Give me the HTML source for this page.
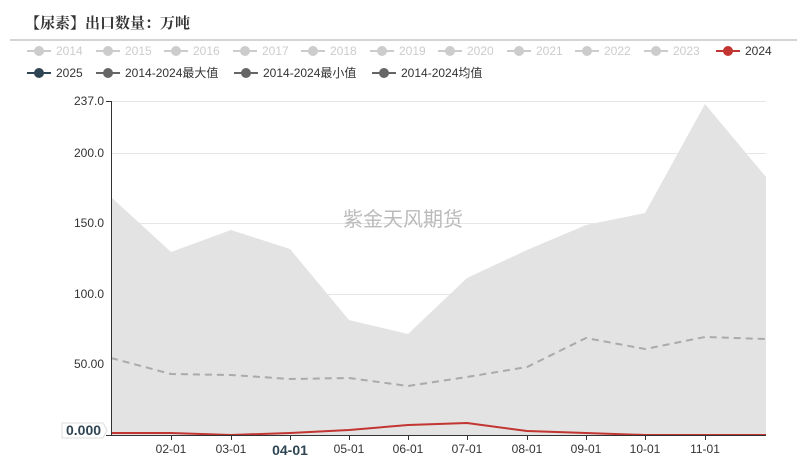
<!DOCTYPE html>
<html><head><meta charset="utf-8"><style>
body{margin:0;background:#fff;width:807px;height:460px;overflow:hidden;font-family:"Liberation Sans","Noto Sans CJK SC",sans-serif}
</style></head><body>
<svg width="807" height="460" xmlns="http://www.w3.org/2000/svg" font-family="Liberation Sans, Noto Sans CJK SC, sans-serif">
<text x="25" y="28" font-size="15" font-weight="bold" fill="#333" font-family="Noto Serif CJK SC, serif">【尿素】出口数量：万吨</text>
<line x1="10" y1="40" x2="797" y2="40" stroke="#aaa" stroke-width="1"/>
<g font-size="12" fill="#ccc">
<g id="l">
</g>
</g>
<g font-size="12">
<line x1="27" y1="51" x2="51" y2="51" stroke="#ccc" stroke-width="2"/><circle cx="39" cy="51" r="5" fill="#ccc"/><text x="56" y="55" fill="#ccc">2014</text>
<line x1="96" y1="51" x2="120" y2="51" stroke="#ccc" stroke-width="2"/><circle cx="108" cy="51" r="5" fill="#ccc"/><text x="125" y="55" fill="#ccc">2015</text>
<line x1="164" y1="51" x2="188" y2="51" stroke="#ccc" stroke-width="2"/><circle cx="176" cy="51" r="5" fill="#ccc"/><text x="193" y="55" fill="#ccc">2016</text>
<line x1="233" y1="51" x2="257" y2="51" stroke="#ccc" stroke-width="2"/><circle cx="245" cy="51" r="5" fill="#ccc"/><text x="262" y="55" fill="#ccc">2017</text>
<line x1="301" y1="51" x2="325" y2="51" stroke="#ccc" stroke-width="2"/><circle cx="313" cy="51" r="5" fill="#ccc"/><text x="330" y="55" fill="#ccc">2018</text>
<line x1="370" y1="51" x2="394" y2="51" stroke="#ccc" stroke-width="2"/><circle cx="382" cy="51" r="5" fill="#ccc"/><text x="399" y="55" fill="#ccc">2019</text>
<line x1="438" y1="51" x2="462" y2="51" stroke="#ccc" stroke-width="2"/><circle cx="450" cy="51" r="5" fill="#ccc"/><text x="467" y="55" fill="#ccc">2020</text>
<line x1="507" y1="51" x2="531" y2="51" stroke="#ccc" stroke-width="2"/><circle cx="519" cy="51" r="5" fill="#ccc"/><text x="536" y="55" fill="#ccc">2021</text>
<line x1="575" y1="51" x2="599" y2="51" stroke="#ccc" stroke-width="2"/><circle cx="587" cy="51" r="5" fill="#ccc"/><text x="604" y="55" fill="#ccc">2022</text>
<line x1="644" y1="51" x2="668" y2="51" stroke="#ccc" stroke-width="2"/><circle cx="656" cy="51" r="5" fill="#ccc"/><text x="673" y="55" fill="#ccc">2023</text>
<line x1="716" y1="51" x2="740" y2="51" stroke="#c23531" stroke-width="2"/><circle cx="728" cy="51" r="5" fill="#c23531"/><text x="745" y="55" fill="#333">2024</text>
<line x1="27" y1="73" x2="51" y2="73" stroke="#2f4554" stroke-width="2"/><circle cx="39" cy="73" r="5" fill="#2f4554"/><text x="56" y="77" fill="#333">2025</text>
<line x1="96" y1="73" x2="120" y2="73" stroke="#666" stroke-width="2"/><circle cx="108" cy="73" r="5" fill="#666"/><text x="125" y="77" fill="#333">2014-2024最大值</text>
<line x1="234" y1="73" x2="258" y2="73" stroke="#666" stroke-width="2"/><circle cx="246" cy="73" r="5" fill="#666"/><text x="263" y="77" fill="#333">2014-2024最小值</text>
<line x1="372" y1="73" x2="396" y2="73" stroke="#666" stroke-width="2"/><circle cx="384" cy="73" r="5" fill="#666"/><text x="401" y="77" fill="#333">2014-2024均值</text>
</g>
<g stroke="#e6e6e6" stroke-width="1">
<line x1="111" y1="101.5" x2="766" y2="101.5"/><line x1="111" y1="153.5" x2="766" y2="153.5"/><line x1="111" y1="223.5" x2="766" y2="223.5"/><line x1="111" y1="294.5" x2="766" y2="294.5"/><line x1="111" y1="364.5" x2="766" y2="364.5"/>
</g>
<polygon points="111,197 171,252 231,230 290,249 349,320 408,334 467,278 527,250 586,225 645,213 705,104 766,177 766,435 111,435" fill="#e3e3e3"/>
<text x="403" y="226" font-size="20" fill="#bbb" text-anchor="middle">紫金天风期货</text>
<polyline points="111,358 171,374 231,375 290,379 349,378 408,386 467,377 527,367 586,338 645,349 705,337 766,339" fill="none" stroke="#aaa" stroke-width="2" stroke-dasharray="7,5"/>
<polyline points="111,433 171,433 231,435 290,433 349,430 408,425 467,423 527,431 586,433 645,435 766,435" fill="none" stroke="#c23531" stroke-width="2"/>
<line x1="111.5" y1="101" x2="111.5" y2="435" stroke="#333"/>
<line x1="106" y1="101.5" x2="111" y2="101.5" stroke="#333"/>
<line x1="106" y1="435.5" x2="766" y2="435.5" stroke="#333"/>
<g stroke="#333"><line x1="171.5" y1="435" x2="171.5" y2="440"/><line x1="231.5" y1="435" x2="231.5" y2="440"/><line x1="290.5" y1="435" x2="290.5" y2="440"/><line x1="349.5" y1="435" x2="349.5" y2="440"/><line x1="408.5" y1="435" x2="408.5" y2="440"/><line x1="467.5" y1="435" x2="467.5" y2="440"/><line x1="527.5" y1="435" x2="527.5" y2="440"/><line x1="586.5" y1="435" x2="586.5" y2="440"/><line x1="645.5" y1="435" x2="645.5" y2="440"/><line x1="705.5" y1="435" x2="705.5" y2="440"/></g>
<g font-size="12" fill="#333" text-anchor="end">
<text x="104" y="105">237.0</text><text x="104" y="157">200.0</text><text x="104" y="227">150.0</text><text x="104" y="298">100.0</text><text x="104" y="368">50.00</text>
</g>
<polygon points="62,423 103,423 107,430 103,438 62,438" fill="#fff" stroke="#ddd"/>
<text x="66" y="435" font-size="14" font-weight="bold" fill="#2f4554">0.000</text>
<g font-size="12" fill="#333" text-anchor="middle">
<text x="171" y="453">02-01</text><text x="231" y="453">03-01</text><text x="290" y="455" font-size="14" font-weight="bold" fill="#2f4554">04-01</text><text x="349" y="453">05-01</text><text x="408" y="453">06-01</text><text x="467" y="453">07-01</text><text x="527" y="453">08-01</text><text x="586" y="453">09-01</text><text x="645" y="453">10-01</text><text x="705" y="453">11-01</text>
</g>
</svg>
</body></html>
